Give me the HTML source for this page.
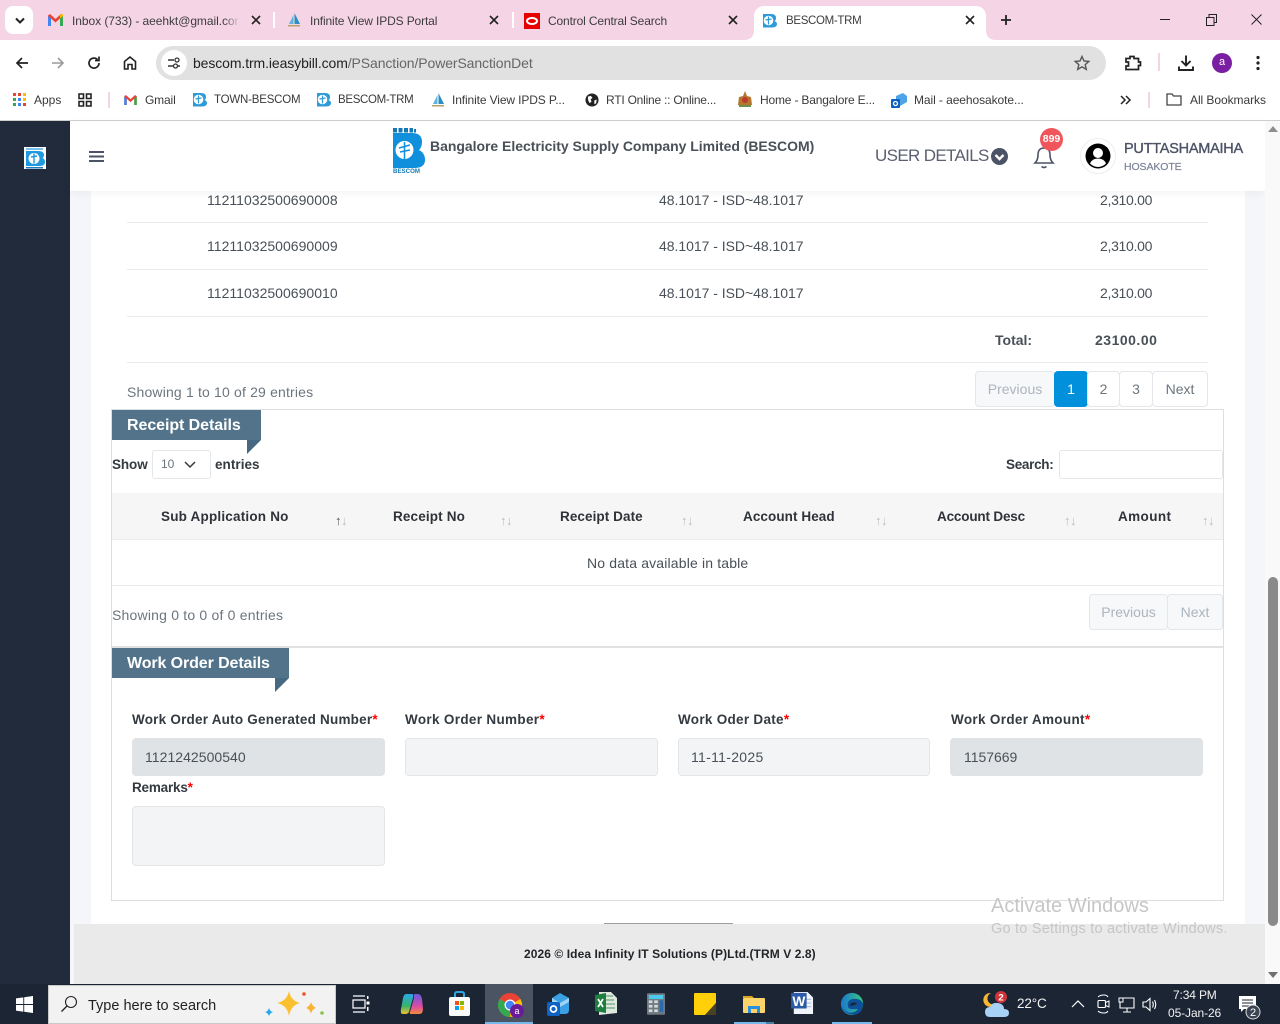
<!DOCTYPE html>
<html lang="en">
<head>
<meta charset="utf-8">
<title>BESCOM-TRM</title>
<style>
*{box-sizing:border-box}
html,body{margin:0;padding:0;width:1280px;height:1024px;overflow:hidden;background:#fff;font-family:"Liberation Sans",sans-serif;color:#212529}
.a{position:absolute}
.t{position:absolute;white-space:nowrap;line-height:16px;font-size:14px}
.tab{font-size:12px;color:#3c3c3c}
.bm{font-size:12px;color:#3a3a3a}
.row{color:#495057;font-size:14px}
.hr{position:absolute;height:1px;background:#e9ecef}
.th{font-weight:bold;font-size:13.5px;color:#2f3238}
.sort{position:absolute;font-size:13px;line-height:12px;color:#b8bcc2;letter-spacing:-.5px;white-space:nowrap}
.lbl{font-weight:bold;font-size:13.5px;color:#343a40}
.lbl b{color:#f00;font-weight:bold}
.inp{position:absolute;border:1px solid #e3e5e8;border-radius:4px;background:#f3f4f6}
.dis{background:#e0e3e6;border-color:#e0e3e6}
.pg{position:absolute;border:1px solid #e3e6ea;border-radius:4px;background:#fff;text-align:center;font-size:14px;line-height:34px;color:#6c757d}
.ribbon{position:absolute;background:#53738a;color:#fff;font-weight:bold;font-size:16px;height:30px;line-height:32px;padding-left:15px;white-space:nowrap}
.fold{position:absolute;width:0;height:0;border-top:14px solid #466880;border-right:14px solid transparent}
svg{position:absolute;overflow:visible}
</style>
</head>
<body>

<!-- Browser tab strip -->
<div class="a" style="left:0;top:0;width:1280px;height:40px;background:#f5d5e5"></div>
<div class="a" style="left:5px;top:6px;width:28px;height:28px;background:#fff;border-radius:8px"></div>
<svg style="left:14px;top:17px" width="12" height="8" viewBox="0 0 12 8"><path d="M2 1.5L6 5.5L10 1.5" fill="none" stroke="#222" stroke-width="2"/></svg>

<svg style="left:48px;top:14px" width="15" height="12" viewBox="0 0 15 12"><path d="M0 12V1.5L2 0 L7.5 5 L13 0 L15 1.5V12H12V4.5L7.5 8.5L3 4.5V12Z" fill="#ea4335"/><path d="M0 12V2L3 4.5V12Z" fill="#4285f4"/><path d="M15 12V2L12 4.5V12Z" fill="#34a853"/><path d="M12 4.5V1L15 0V2Z" fill="#fbbc04"/></svg>
<div class="t tab" style="left:72px;top:13px;width:166px;overflow:hidden;letter-spacing:-.06px">Inbox (733) - aeehkt@gmail.con</div>
<div class="a" style="left:224px;top:10px;width:16px;height:20px;background:linear-gradient(90deg,rgba(245,213,229,0),#f5d5e5)"></div>
<svg style="left:251px;top:15px" width="10" height="10" viewBox="0 0 10 10"><path d="M1 1L9 9M9 1L1 9" stroke="#222" stroke-width="1.6"/></svg>
<div class="a" style="left:273px;top:12px;width:2px;height:16px;background:#fff"></div>

<svg style="left:287px;top:13px" width="14" height="14" viewBox="0 0 14 14"><path d="M7.5 0L13 11H7.5Z" fill="#2b8fc4"/><path d="M6.5 2L2 11H6.5Z" fill="#5bb5dc"/><rect x="1" y="12" width="12" height="1.5" fill="#b9a266"/></svg>
<div class="t tab" style="left:310px;top:13px;letter-spacing:-.13px">Infinite View IPDS Portal</div>
<svg style="left:489px;top:15px" width="10" height="10" viewBox="0 0 10 10"><path d="M1 1L9 9M9 1L1 9" stroke="#222" stroke-width="1.6"/></svg>
<div class="a" style="left:512px;top:12px;width:2px;height:16px;background:#fff"></div>

<div class="a" style="left:524px;top:13px;width:16px;height:16px;background:#e60000"></div>
<div class="a" style="left:526px;top:17px;width:12px;height:8px;border-radius:50%;background:#fff"></div>
<div class="a" style="left:528px;top:19px;width:8px;height:4px;border-radius:50%;background:#e60000"></div>
<div class="t tab" style="left:548px;top:13px;letter-spacing:-.14px">Control Central Search</div>
<svg style="left:728px;top:15px" width="10" height="10" viewBox="0 0 10 10"><path d="M1 1L9 9M9 1L1 9" stroke="#222" stroke-width="1.6"/></svg>

<!-- Active tab -->
<div class="a" style="left:754px;top:6px;width:232px;height:34px;background:#fff;border-radius:10px 10px 0 0"></div>
<svg style="left:744px;top:30px" width="252" height="10" viewBox="0 0 252 10"><path d="M0 10Q10 10 10 0V10Z" fill="#fff"/><path d="M252 10Q242 10 242 0V10Z" fill="#fff"/></svg>
<svg style="left:762px;top:13px" width="15" height="15" viewBox="0 0 15 15"><path d="M1 1H9Q14 1 14 5Q14 7 12.5 8Q15 9 15 11Q15 14.500 10 14.500H1Z" fill="#2c9bd8"/><circle cx="6.500" cy="7.500" r="4.800" fill="#fff"/><path d="M6.500 3.500V11.500M3.500 7L9.500 6" stroke="#2c9bd8" stroke-width="1.2"/></svg>
<div class="t tab" style="left:786px;top:13px;font-size:11.5px;letter-spacing:-.32px">BESCOM-TRM</div>
<svg style="left:965px;top:15px" width="10" height="10" viewBox="0 0 10 10"><path d="M1 1L9 9M9 1L1 9" stroke="#222" stroke-width="1.6"/></svg>
<svg style="left:1000px;top:14px" width="12" height="12" viewBox="0 0 12 12"><path d="M6 1V11M1 6H11" stroke="#222" stroke-width="1.8"/></svg>

<!-- Window controls -->
<svg style="left:1160px;top:19px" width="10" height="1" viewBox="0 0 10 1"><rect width="10" height="1" fill="#222"/></svg>
<svg style="left:1206px;top:14px" width="11" height="12" viewBox="0 0 11 12"><path d="M.5 3.500H8V11.500H.5ZM3 3.500V.5H10.500V8.500H8" fill="none" stroke="#222"/></svg>
<svg style="left:1251px;top:14px" width="11" height="11" viewBox="0 0 11 11"><path d="M.5.5L10.500 10.500M10.500.5L.5 10.500" stroke="#222" stroke-width="1"/></svg>

<!-- Toolbar -->
<div class="a" style="left:0;top:40px;width:1280px;height:80px;background:#fff;border-radius:10px 10px 0 0"></div>
<div class="a" style="left:754px;top:34px;width:232px;height:10px;background:#fff"></div>
<svg style="left:14px;top:55px" width="16" height="16" viewBox="0 0 16 16"><path d="M14 8H3M8 3L3 8L8 13" fill="none" stroke="#222" stroke-width="1.7"/></svg>
<svg style="left:50px;top:55px" width="16" height="16" viewBox="0 0 16 16"><path d="M2 8H13M8 3L13 8L8 13" fill="none" stroke="#9a9a9a" stroke-width="1.6"/></svg>
<svg style="left:86px;top:55px" width="16" height="16" viewBox="0 0 16 16"><path d="M13 8A5 5 0 1 1 11.500 4.500M13 1.500V5.500H9" fill="none" stroke="#222" stroke-width="1.7"/></svg>
<svg style="left:122px;top:55px" width="16" height="16" viewBox="0 0 16 16"><path d="M2.500 14V6.500L8 2L13.500 6.500V14H10V9.500H6V14Z" fill="none" stroke="#222" stroke-width="1.6"/></svg>
<div class="a" style="left:156px;top:46px;width:950px;height:34px;background:#e1e1e1;border-radius:17px"></div>
<div class="a" style="left:161px;top:50px;width:26px;height:26px;background:#fff;border-radius:13px"></div>
<svg style="left:167px;top:56px" width="14" height="14" viewBox="0 0 14 14"><path d="M1 4H7M11 10H13M1 10H6" stroke="#333" stroke-width="1.4"/><circle cx="10" cy="4" r="2" fill="none" stroke="#333" stroke-width="1.3"/><circle cx="8.500" cy="10" r="2" fill="none" stroke="#333" stroke-width="1.3"/></svg>
<div class="t" style="left:193px;top:55px;font-size:14px;color:#222;letter-spacing:-.1px">bescom.trm.ieasybill.com<span style="color:#666">/PSanction/PowerSanctionDet</span></div>
<svg style="left:1074px;top:55px" width="16" height="16" viewBox="0 0 16 16"><path d="M8 1.500L10 6L14.800 6.400L11.200 9.600L12.300 14.400L8 11.800L3.700 14.400L4.800 9.600L1.200 6.400L6 6Z" fill="none" stroke="#555" stroke-width="1.4"/></svg>
<svg style="left:1124px;top:54px" width="18" height="18" viewBox="0 0 18 18"><path d="M2 4.500H6V2.500H10V4.500H14.500V8H16.500V11.500H14.500V15.500H2V12H4.500V8H2Z" fill="none" stroke="#222" stroke-width="1.7"/></svg>
<div class="a" style="left:1158px;top:53px;width:2px;height:18px;background:#f5d5e5"></div>
<svg style="left:1177px;top:54px" width="18" height="18" viewBox="0 0 18 18"><path d="M9 1.500V11M4.500 7L9 11.500L13.500 7M2 12.500V16H16V12.500" fill="none" stroke="#222" stroke-width="1.900"/></svg>
<div class="a" style="left:1212px;top:53px;width:20px;height:20px;border-radius:50%;background:#7b1fa2;color:#fff;font-size:11px;line-height:19px;text-align:center">a</div>
<svg style="left:1256px;top:55px" width="4" height="16" viewBox="0 0 4 16"><circle cx="2" cy="2.500" r="1.600" fill="#222"/><circle cx="2" cy="8" r="1.600" fill="#222"/><circle cx="2" cy="13.500" r="1.600" fill="#222"/></svg>

<!-- Bookmarks bar -->
<svg style="left:13px;top:93px" width="13" height="13" viewBox="0 0 13 13">
<rect width="3" height="3" fill="#ea4335"/><rect x="5" width="3" height="3" fill="#ea4335"/><rect x="10" width="3" height="3" fill="#fbbc04"/>
<rect y="5" width="3" height="3" fill="#34a853"/><rect x="5" y="5" width="3" height="3" fill="#4285f4"/><rect x="10" y="5" width="3" height="3" fill="#fbbc04"/>
<rect y="10" width="3" height="3" fill="#34a853"/><rect x="5" y="10" width="3" height="3" fill="#4285f4"/><rect x="10" y="10" width="3" height="3" fill="#ea4335"/></svg>
<div class="t bm" style="left:34px;top:92px">Apps</div>
<svg style="left:78px;top:93px" width="14" height="14" viewBox="0 0 14 14"><path d="M1 1H5.500V5.500H1ZM8.500 1H13V5.500H8.500ZM1 8.500H5.500V13H1ZM8.500 8.500H13V13H8.500Z" fill="none" stroke="#222" stroke-width="1.600"/></svg>
<div class="a" style="left:108px;top:92px;width:2px;height:16px;background:#f5d5e5"></div>
<svg style="left:124px;top:95px" width="13" height="10" viewBox="0 0 15 12"><path d="M0 12V1.500L2 0 L7.500 5 L13 0 L15 1.500V12H12V4.500L7.500 8.500L3 4.500V12Z" fill="#ea4335"/><path d="M0 12V2L3 4.500V12Z" fill="#4285f4"/><path d="M15 12V2L12 4.500V12Z" fill="#34a853"/></svg>
<div class="t bm" style="left:145px;top:92px;letter-spacing:-.15px">Gmail</div>
<svg style="left:192px;top:92px" width="15" height="15" viewBox="0 0 15 15"><path d="M1 1H9Q14 1 14 5Q14 7 12.500 8Q15 9 15 11Q15 14.500 10 14.500H1Z" fill="#2c9bd8"/><circle cx="6.500" cy="7.500" r="4.800" fill="#fff"/><path d="M6.500 3.500V11.500M3.500 7L9.500 6" stroke="#2c9bd8" stroke-width="1.200"/></svg>
<div class="t bm" style="left:214px;top:92px;font-size:11.5px;letter-spacing:-.2px">TOWN-BESCOM</div>
<svg style="left:316px;top:92px" width="15" height="15" viewBox="0 0 15 15"><path d="M1 1H9Q14 1 14 5Q14 7 12.500 8Q15 9 15 11Q15 14.500 10 14.500H1Z" fill="#2c9bd8"/><circle cx="6.500" cy="7.500" r="4.800" fill="#fff"/><path d="M6.500 3.500V11.500M3.500 7L9.500 6" stroke="#2c9bd8" stroke-width="1.200"/></svg>
<div class="t bm" style="left:338px;top:92px;font-size:11.5px;letter-spacing:-.32px">BESCOM-TRM</div>
<svg style="left:431px;top:93px" width="14" height="14" viewBox="0 0 14 14"><path d="M7.500 0L13 11H7.500Z" fill="#2b8fc4"/><path d="M6.500 2L2 11H6.500Z" fill="#5bb5dc"/><rect x="1" y="12" width="12" height="1.500" fill="#b9a266"/></svg>
<div class="t bm" style="left:452px;top:92px;letter-spacing:-.12px">Infinite View IPDS P...</div>
<svg style="left:585px;top:93px" width="14" height="14" viewBox="0 0 15 15"><circle cx="7.500" cy="7.500" r="7" fill="#222"/><path d="M3 4L6 3L8 5L6 7L7 9L5 11L3.500 8ZM10 8L12.500 7L12 11L10 12Z" fill="#fff"/></svg>
<div class="t bm" style="left:606px;top:92px;letter-spacing:-.22px">RTI Online :: Online...</div>
<svg style="left:737px;top:91px" width="16" height="17" viewBox="0 0 16 17"><path d="M8 0L10 5L14 6L15 14L8 16L1 14L2 6L6 5Z" fill="#b5762f"/><circle cx="8" cy="9" r="3" fill="#c0392b"/><rect x="2" y="14" width="12" height="2" fill="#6d8f4a"/></svg>
<div class="t bm" style="left:760px;top:92px;letter-spacing:-.18px">Home - Bangalore E...</div>
<svg style="left:891px;top:93px" width="16" height="15" viewBox="0 0 16 15"><path d="M5 3L12 0L16 3V9L9 13H5Z" fill="#4fa4e8"/><rect x="0" y="6" width="9" height="9" rx="1" fill="#0f5fc0"/><circle cx="4.500" cy="10.500" r="2" fill="none" stroke="#fff" stroke-width="1.300"/></svg>
<div class="t bm" style="left:914px;top:92px;letter-spacing:-.08px">Mail - aeehosakote...</div>
<svg style="left:1120px;top:95px" width="11" height="10" viewBox="0 0 11 10"><path d="M1 1L5 5L1 9M6 1L10 5L6 9" fill="none" stroke="#222" stroke-width="1.500"/></svg>
<div class="a" style="left:1148px;top:92px;width:2px;height:16px;background:#f5d5e5"></div>
<svg style="left:1166px;top:93px" width="16" height="13" viewBox="0 0 16 13"><path d="M1 1H6L7.500 3H15V12H1Z" fill="none" stroke="#444" stroke-width="1.300"/></svg>
<div class="t bm" style="left:1190px;top:92px;letter-spacing:-.06px">All Bookmarks</div>
<div class="a" style="left:0;top:120px;width:1280px;height:1px;background:#cfcfcf"></div>

<!-- Page background -->
<div class="a" style="left:70px;top:121px;width:1195px;height:863px;background:#f5f6fa"></div>

<!-- White card -->
<div class="a" style="left:91px;top:191px;width:1154px;height:733px;background:#fff"></div>

<!-- Upper table -->
<div class="t row" style="left:207px;top:192px;letter-spacing:.02px">11211032500690008</div>
<div class="t row" style="left:659px;top:192px;letter-spacing:-.03px">48.1017 - ISD~48.1017</div>
<div class="t row" style="left:1100px;top:192px;letter-spacing:-.3px">2,310.00</div>
<div class="hr" style="left:127px;top:222px;width:1081px"></div>
<div class="t row" style="left:207px;top:238px;letter-spacing:.02px">11211032500690009</div>
<div class="t row" style="left:659px;top:238px;letter-spacing:-.03px">48.1017 - ISD~48.1017</div>
<div class="t row" style="left:1100px;top:238px;letter-spacing:-.3px">2,310.00</div>
<div class="hr" style="left:127px;top:269px;width:1081px"></div>
<div class="t row" style="left:207px;top:285px;letter-spacing:.02px">11211032500690010</div>
<div class="t row" style="left:659px;top:285px;letter-spacing:-.03px">48.1017 - ISD~48.1017</div>
<div class="t row" style="left:1100px;top:285px;letter-spacing:-.3px">2,310.00</div>
<div class="hr" style="left:127px;top:316px;width:1081px"></div>
<div class="t" style="left:995px;top:332px;font-weight:bold;color:#495057">Total:</div>
<div class="t" style="left:1095px;top:332px;font-weight:bold;color:#495057;letter-spacing:.5px">23100.00</div>
<div class="hr" style="left:127px;top:362px;width:1081px"></div>
<div class="t" style="left:127px;top:384px;color:#6c757d;letter-spacing:.17px">Showing 1 to 10 of 29 entries</div>

<div class="pg" style="left:975px;top:371px;width:80px;height:36px;background:#f7f8fa;color:#adb5bd">Previous</div>
<div class="pg" style="left:1054px;top:371px;width:34px;height:36px;background:#0090dc;border-color:#0090dc;color:#fff">1</div>
<div class="pg" style="left:1087px;top:371px;width:33px;height:36px">2</div>
<div class="pg" style="left:1119px;top:371px;width:34px;height:36px">3</div>
<div class="pg" style="left:1152px;top:371px;width:56px;height:36px">Next</div>

<!-- Receipt section -->
<div class="a" style="left:111px;top:409px;width:1113px;height:492px;border:1px solid #dcdfe2;background:#fff"></div>
<div class="ribbon" style="left:112px;top:410px;width:149px;letter-spacing:-.07px">Receipt Details</div>
<div class="fold" style="left:247px;top:440px"></div>
<div class="t" style="left:112px;top:457px;font-weight:bold;font-size:13.5px;color:#343a40;letter-spacing:-.1px">Show</div>
<div class="a" style="left:152px;top:450px;width:59px;height:29px;border:1px solid #e3e6ea;border-radius:3px;background:#fff"></div>
<div class="t" style="left:161px;top:456px;font-size:12px;color:#6c757d">10</div>
<svg style="left:184px;top:461px" width="12" height="8" viewBox="0 0 12 8"><path d="M1 1L6 6L11 1" fill="none" stroke="#343a40" stroke-width="1.500"/></svg>
<div class="t" style="left:215px;top:457px;font-weight:bold;font-size:13.5px;color:#343a40;letter-spacing:.05px">entries</div>
<div class="t" style="left:1006px;top:457px;font-weight:bold;font-size:13.5px;color:#343a40;letter-spacing:-.3px">Search:</div>
<div class="a" style="left:1059px;top:450px;width:164px;height:29px;border:1px solid #e3e6ea;border-radius:3px;background:#fff"></div>

<div class="a" style="left:112px;top:493px;width:1111px;height:47px;background:#f6f6f6;border-bottom:1px solid #e9ecef"></div>
<div class="t th" style="left:161px;top:509px;letter-spacing:.2px">Sub Application No</div>
<div class="sort" style="left:335px;top:515px"><span style="color:#555">↑</span>↓</div>
<div class="t th" style="left:393px;top:509px;letter-spacing:.15px">Receipt No</div>
<div class="sort" style="left:500px;top:515px">↑↓</div>
<div class="t th" style="left:560px;top:509px;letter-spacing:.08px">Receipt Date</div>
<div class="sort" style="left:681px;top:515px">↑↓</div>
<div class="t th" style="left:743px;top:509px;letter-spacing:.08px">Account Head</div>
<div class="sort" style="left:875px;top:515px">↑↓</div>
<div class="t th" style="left:937px;top:509px;letter-spacing:-.17px">Account Desc</div>
<div class="sort" style="left:1064px;top:515px">↑↓</div>
<div class="t th" style="left:1118px;top:509px;letter-spacing:.4px">Amount</div>
<div class="sort" style="left:1202px;top:515px">↑↓</div>

<div class="t" style="left:587px;top:555px;color:#495057;letter-spacing:.16px">No data available in table</div>
<div class="hr" style="left:112px;top:585px;width:1111px"></div>
<div class="t" style="left:112px;top:607px;color:#6c757d;letter-spacing:.2px">Showing 0 to 0 of 0 entries</div>
<div class="pg" style="left:1089px;top:594px;width:79px;height:36px;background:#f7f8fa;color:#adb5bd">Previous</div>
<div class="pg" style="left:1167px;top:594px;width:56px;height:36px;background:#f7f8fa;color:#adb5bd">Next</div>

<!-- Work order section -->
<div class="a" style="left:112px;top:646px;width:1111px;height:2px;background:#dfe1e3"></div>
<div class="ribbon" style="left:112px;top:648px;width:177px;letter-spacing:-.1px">Work Order Details</div>
<div class="fold" style="left:275px;top:678px"></div>

<div class="t lbl" style="left:132px;top:712px;letter-spacing:.22px">Work Order Auto Generated Number<b>*</b></div>
<div class="t lbl" style="left:405px;top:712px;letter-spacing:.33px">Work Order Number<b>*</b></div>
<div class="t lbl" style="left:678px;top:712px;letter-spacing:.29px">Work Oder Date<b>*</b></div>
<div class="t lbl" style="left:951px;top:712px;letter-spacing:.33px">Work Order Amount<b>*</b></div>

<div class="inp dis" style="left:132px;top:738px;width:253px;height:38px"></div>
<div class="t" style="left:145px;top:749px;color:#495057;letter-spacing:.04px">1121242500540</div>
<div class="inp" style="left:405px;top:738px;width:253px;height:38px"></div>
<div class="inp" style="left:678px;top:738px;width:252px;height:38px"></div>
<div class="t" style="left:691px;top:749px;color:#495057;letter-spacing:.3px">11-11-2025</div>
<div class="inp dis" style="left:950px;top:738px;width:253px;height:38px"></div>
<div class="t" style="left:964px;top:749px;color:#495057;letter-spacing:-.04px">1157669</div>

<div class="t lbl" style="left:132px;top:780px;letter-spacing:-.2px">Remarks<b>*</b></div>
<div class="inp" style="left:132px;top:806px;width:253px;height:60px"></div>

<!-- Footer -->
<div class="a" style="left:74px;top:924px;width:1191px;height:60px;background:#eaeaea"></div>
<div class="a" style="left:604px;top:923px;width:129px;height:1px;background:#9e9e9e"></div>
<div class="t" style="left:524px;top:946px;font-size:12px;font-weight:bold;color:#212529;letter-spacing:.08px">2026 © Idea Infinity IT Solutions (P)Ltd.(TRM V 2.8)</div>

<!-- Activate watermark -->
<div class="t" style="left:991px;top:895px;font-size:20px;line-height:22px;color:#c6c6c6;letter-spacing:0">Activate Windows</div>
<div class="t" style="left:991px;top:921px;font-size:14.5px;color:#c6c6c6;letter-spacing:.22px">Go to Settings to activate Windows.</div>

<!-- Sidebar -->
<div class="a" style="left:0;top:121px;width:70px;height:863px;background:#212b3c"></div>
<svg style="left:24px;top:147px" width="22" height="22" viewBox="0 0 22 22"><rect width="22" height="22" fill="#fff"/><rect x="2" y="1" width="17" height="2" fill="#7cc0e8"/><path d="M2 4H14Q20 4 20 8Q20 10 18.500 11Q21 12 21 15Q21 19 15 19H2Z" fill="#1f9ae0"/><circle cx="10" cy="11.500" r="5.500" fill="#fff"/><path d="M10 6.500V16.500M7 10L13 9" stroke="#1f9ae0" stroke-width="1.400"/><rect x="2" y="20" width="17" height="1.500" fill="#1f78b8"/></svg>

<!-- Top header -->
<div class="a" style="left:70px;top:121px;width:1195px;height:70px;background:#fff;box-shadow:0 2px 8px rgba(0,0,0,.05)"></div>
<svg style="left:89px;top:151px" width="15" height="11" viewBox="0 0 15 11"><path d="M0 0H15V2H0ZM0 4.500H15V6.500H0ZM0 9H15V11H0Z" fill="#4c5366"/></svg>

<!-- BESCOM logo -->
<svg style="left:392px;top:127px" width="34" height="47" viewBox="0 0 34 47">
<g fill="#1478b5"><rect x="1" y="1" width="4" height="4.500"/><rect x="6.500" y="1" width="4" height="4.500"/><rect x="12" y="1" width="4" height="4.500"/><rect x="17.500" y="1" width="3.500" height="4.500"/><rect x="22" y="2" width="2" height="3.500"/></g>
<path d="M1 6H20Q30 6 30 15Q30 20 27 23Q33 26 33 33Q33 41 22 41H1Z" fill="#0f8fdc"/>
<circle cx="12.500" cy="23" r="9" fill="#fff"/>
<path d="M12.500 15V32M7 21L18 18M8 25L18 23" stroke="#0f8fdc" stroke-width="1.500" fill="none"/>
<text x="1" y="46" font-size="6" font-weight="bold" fill="#1478b5" font-family="Liberation Sans" textLength="27" lengthAdjust="spacingAndGlyphs">BESCOM</text>
</svg>
<div class="t" style="left:430px;top:138px;font-size:14px;font-weight:bold;color:#495057;letter-spacing:-.03px">Bangalore Electricity Supply Company Limited (BESCOM)</div>

<div class="t" style="left:875px;top:146px;font-size:17px;line-height:20px;color:#5a6070;letter-spacing:-.65px">USER DETAILS</div>
<svg style="left:991px;top:148px" width="17" height="17" viewBox="0 0 17 17"><circle cx="8.500" cy="8.500" r="8.500" fill="#4c5366"/><path d="M4.500 7L8.500 11L12.500 7" fill="none" stroke="#fff" stroke-width="2.400"/></svg>
<svg style="left:1033px;top:145px" width="22" height="24" viewBox="0 0 22 24"><path d="M2 18Q5 15 5 10Q5 3 11 3Q17 3 17 10Q17 15 20 18Z" fill="none" stroke="#4c5366" stroke-width="1.600"/><path d="M8.500 21.500Q11 23.500 13.500 21.500" fill="none" stroke="#4c5366" stroke-width="1.600"/></svg>
<div class="a" style="left:1040px;top:128px;width:23px;height:23px;border-radius:50%;background:#f1555c;color:#fff;font-size:10.5px;font-weight:bold;line-height:23px;text-align:center">899</div>
<div class="a" style="left:1080px;top:138px;width:36px;height:36px;border-radius:50%;background:#fff;border:1px solid #eceef0"></div>
<svg style="left:1085px;top:143px" width="26" height="26" viewBox="0 0 26 26"><circle cx="13" cy="13" r="12.500" fill="#000"/><circle cx="13" cy="10" r="4.500" fill="#fff" stroke="#fff"/><path d="M5 20.500Q7 15.500 13 15.500Q19 15.500 21 20.500Q17.500 24 13 24Q8.500 24 5 20.500Z" fill="#fff"/></svg>
<div class="t" style="left:1124px;top:141px;font-size:14.5px;color:#4c5366;letter-spacing:-.25px;-webkit-text-stroke:.35px #4c5366">PUTTASHAMAIHA</div>
<div class="t" style="left:1124px;top:159px;font-size:10.5px;color:#7d8499;letter-spacing:-.1px;-webkit-text-stroke:.2px #7d8499">HOSAKOTE</div>

<!-- Scrollbar -->
<div class="a" style="left:1265px;top:121px;width:15px;height:863px;background:#f9f9f9"></div>
<svg style="left:1268px;top:126px" width="10" height="6" viewBox="0 0 10 6"><path d="M5 0L10 6H0Z" fill="#8f8f8f"/></svg>
<div class="a" style="left:1268px;top:577px;width:10px;height:349px;background:#8a8a8a;border-radius:5px"></div>
<svg style="left:1268px;top:972px" width="10" height="6" viewBox="0 0 10 6"><path d="M0 0H10L5 6Z" fill="#6f6f6f"/></svg>

<!-- Taskbar -->
<div class="a" style="left:0;top:984px;width:1280px;height:40px;background:#1b2534"></div>
<svg style="left:16px;top:996px" width="17" height="17" viewBox="0 0 17 17"><path d="M0 2.400L7.300 1.400V8H0ZM8.200 1.300L17 0V8H8.200ZM0 9H7.300V15.700L0 14.600ZM8.200 9H17V17L8.200 15.800Z" fill="#fff"/></svg>
<div class="a" style="left:48px;top:985px;width:288px;height:39px;background:#f2f2f2;border:1px solid #c9c9c9"></div>
<svg style="left:60px;top:995px" width="18" height="18" viewBox="0 0 18 18"><circle cx="11" cy="7" r="5.500" fill="none" stroke="#222" stroke-width="1.100"/><path d="M7 11L1.500 16.500" stroke="#222" stroke-width="1.300"/></svg>
<div class="t" style="left:88px;top:998px;font-size:14.5px;color:#222;letter-spacing:0">Type here to search</div>
<svg style="left:264px;top:990px" width="64" height="30" viewBox="0 0 64 30">
<path d="M25 1Q27 11 36 13Q27 15 25 26Q23 15 13 13Q23 11 25 1Z" fill="#fbc02d"/>
<path d="M47 12Q48 16 52 18Q48 19 47 24Q46 19 42 18Q46 16 47 12Z" fill="#f9b233"/>
<path d="M5 18Q6 21.500 9 22Q6 23 5 26Q4 23 1 22Q4 21.500 5 18Z" fill="#29a8e8"/>
<circle cx="40" cy="4" r="1.800" fill="#e8532b"/><circle cx="58" cy="23" r="1.800" fill="#8bc34a"/>
</svg>
<svg style="left:352px;top:995px" width="18" height="18" viewBox="0 0 18 18"><path d="M1 1H13M1 17H13M1 5H13V13H1Z" fill="none" stroke="#fff" stroke-width="1.200"/><rect x="15" y="1" width="1.500" height="3" fill="#fff"/><rect x="14.500" y="6.500" width="3" height="3" fill="#fff"/><rect x="15" y="12" width="1.500" height="4" fill="#fff"/></svg>
<svg style="left:400px;top:992px" width="23" height="24" viewBox="0 0 23 24"><defs><linearGradient id="cpa" x1="0" y1="0" x2="0" y2="1"><stop offset="0" stop-color="#2aa7e8"/><stop offset=".6" stop-color="#37b36a"/><stop offset="1" stop-color="#f2c230"/></linearGradient><linearGradient id="cpb" x1="0" y1="0" x2="0" y2="1"><stop offset="0" stop-color="#6a5be0"/><stop offset=".6" stop-color="#d84ba8"/><stop offset="1" stop-color="#f58a3c"/></linearGradient></defs><path d="M6 2H12Q14 2 13 6L9 20Q8 22 5 22H3Q0 22 1 17L3 6Q4 2 6 2Z" fill="url(#cpa)"/><path d="M14 2H18Q21 2 22 7L23 17Q23 22 19 22H11Q9 22 10 20L14 6Z" fill="url(#cpb)"/></svg>
<svg style="left:448px;top:991px" width="23" height="26" viewBox="0 0 23 26"><path d="M7 7V3Q7 1 9 1H14Q16 1 16 3V7" fill="none" stroke="#29a8e8" stroke-width="2"/><rect x="1" y="6" width="21" height="19" rx="2" fill="#fafafa"/><rect x="7" y="10" width="4" height="4" fill="#f25022"/><rect x="12" y="10" width="4" height="4" fill="#7fba00"/><rect x="7" y="15" width="4" height="4" fill="#00a4ef"/><rect x="12" y="15" width="4" height="4" fill="#ffb900"/></svg>
<div class="a" style="left:485px;top:984px;width:48px;height:40px;background:#4a5462"></div>
<div class="a" style="left:485px;top:1022px;width:48px;height:2px;background:#76b9ed"></div>
<svg style="left:497px;top:992px" width="30" height="28" viewBox="0 0 30 28"><circle cx="13" cy="13" r="12" fill="#ea4335"/><path d="M13 13L2.600 7A12 12 0 0 0 13 25Z" fill="#34a853"/><path d="M13 13L23.400 7A12 12 0 0 1 13 25Z" fill="#fbbc04"/><circle cx="13" cy="13" r="5.500" fill="#fff"/><circle cx="13" cy="13" r="4.200" fill="#4285f4"/><circle cx="20" cy="19" r="7" fill="#6a1b9a"/><text x="20" y="22" font-size="9" fill="#fff" text-anchor="middle" font-family="Liberation Sans">a</text></svg>
<svg style="left:546px;top:992px" width="24" height="26" viewBox="0 0 24 26"><path d="M6 6L14 1L23 6V18Q23 22 19 22H6Z" fill="#3aa0e6"/><path d="M6 6L14 11L23 6V10L14 15L6 10Z" fill="#9fd4f5"/><rect x="1" y="10" width="13" height="14" rx="2" fill="#0f62c4"/><circle cx="7.500" cy="17" r="3" fill="none" stroke="#fff" stroke-width="1.700"/></svg>
<svg style="left:595px;top:992px" width="23" height="23" viewBox="0 0 23 23"><path d="M4 0H16L22 6V21L4 23Z" fill="#dfe8df"/><path d="M8 4H18M8 8H19M8 12H20M8 16H20" stroke="#7fb08f" stroke-width="1.500"/><path d="M0 3L11 1V21L0 19Z" fill="#1e7e3e"/><path d="M3 7L8 15M8 7L3 15" stroke="#fff" stroke-width="1.700"/></svg>
<svg style="left:647px;top:992px" width="18" height="24" viewBox="0 0 20 24"><rect width="20" height="24" rx="1" fill="#6f7a80"/><rect x="2" y="2" width="16" height="4.500" fill="#4dc8f0"/><g fill="#d6dadc"><rect x="2" y="8" width="4" height="3"/><rect x="8" y="8" width="4" height="3"/><rect x="2" y="13" width="4" height="3"/><rect x="8" y="13" width="4" height="3"/><rect x="2" y="18" width="4" height="3"/><rect x="8" y="18" width="4" height="3"/></g><rect x="14" y="8" width="4" height="13" fill="#2a6ab0"/></svg>
<svg style="left:694px;top:993px" width="22" height="22" viewBox="0 0 22 22"><path d="M1 0H21Q22 0 22 1V10L11 22H1Q0 22 0 21V1Q0 0 1 0Z" fill="#ffcf0a"/><path d="M22 10V21Q22 22 21 22H11Z" fill="#4a4122"/></svg>
<svg style="left:743px;top:995px" width="22" height="18" viewBox="0 0 22 18"><path d="M0 1H9L11 3H0Z" fill="#d9a520"/><rect x="0" y="3" width="22" height="15" rx="1" fill="#fdd46a"/><path d="M5 18V11H17V18H14V14H8V18Z" fill="#2a8fdc"/></svg>
<div class="a" style="left:734px;top:1022px;width:32px;height:2px;background:#76b9ed"></div>
<div class="a" style="left:766px;top:1022px;width:8px;height:2px;background:#4a7fa8"></div>
<svg style="left:791px;top:992px" width="23" height="22" viewBox="0 0 25 24"><path d="M3 0H18L24 6V24H3Z" fill="#f0f4fa"/><path d="M17 8H22M17 12H22M17 16H22" stroke="#a9bad6" stroke-width="1.200"/><rect x="0" y="1" width="17" height="17" fill="#2a5aa8"/><text x="8.500" y="15" font-size="15" font-weight="bold" fill="#fff" text-anchor="middle" font-family="Liberation Sans">W</text></svg>
<svg style="left:840px;top:992px" width="24" height="24" viewBox="0 0 28 26"><defs><linearGradient id="ed" x1="0" y1="0" x2="1" y2="0"><stop offset="0" stop-color="#1b78d0"/><stop offset="1" stop-color="#36c77e"/></linearGradient></defs><circle cx="14" cy="13" r="13" fill="url(#ed)"/><path d="M27 14Q26 7 17 7Q9 7 9 14Q9 19 14 19H21Q17 24 10 23Q2 20 3 11Q2 22 12 25Q20 27 25 21Z" fill="#0d4f98"/><path d="M12 13Q15 10 20 12Q18 15 12 15Z" fill="#1b2534"/></svg>
<div class="a" style="left:832px;top:1022px;width:40px;height:2px;background:#76b9ed"></div>

<!-- Tray -->
<svg style="left:984px;top:991px" width="26" height="27" viewBox="0 0 26 27"><path d="M7 2A7 7 0 1 0 12 13A6 6 0 0 1 7 2Z" fill="#f7b733"/><path d="M6 26Q1 26 1 21Q1 16 6 16Q8 11 14 12Q20 13 20 18Q25 18 25 22Q25 26 20 26Z" fill="#a8d2f5"/><circle cx="17" cy="6" r="6" fill="#d13438"/><text x="17" y="9.500" font-size="9.500" font-weight="bold" fill="#fff" text-anchor="middle" font-family="Liberation Sans">2</text></svg>
<div class="t" style="left:1017px;top:996px;font-size:13.5px;color:#f2f2f2;letter-spacing:-.15px">22°C</div>
<svg style="left:1071px;top:999px" width="14" height="9" viewBox="0 0 14 9"><path d="M1 8L7 2L13 8" fill="none" stroke="#fff" stroke-width="1.200"/></svg>
<svg style="left:1096px;top:994px" width="14" height="20" viewBox="0 0 14 20"><rect x="2" y="6.500" width="7.500" height="7" rx="1" fill="none" stroke="#fff" stroke-width="1.100"/><path d="M9.500 8.500L13 7V13L9.500 11.500M2 3Q4 1 8 1Q11 1 12 3M2 17Q4 19 8 19Q11 19 12 17" fill="none" stroke="#fff" stroke-width="1"/></svg>
<svg style="left:1118px;top:997px" width="17" height="16" viewBox="0 0 17 16"><path d="M4 1H16V11H2V5M9 11V15M5 15H13" fill="none" stroke="#fff" stroke-width="1.100"/><rect x="1" y="1" width="4" height="4" fill="#1b2534" stroke="#fff"/></svg>
<svg style="left:1142px;top:997px" width="16" height="15" viewBox="0 0 16 15"><path d="M1 5H4L8 1.500V13.500L4 10H1ZM10.500 4.500Q12 7.500 10.500 10.500M12.500 3Q15 7.500 12.500 12" fill="none" stroke="#fff" stroke-width="1.100"/></svg>
<div class="t" style="left:1173px;top:987px;font-size:12px;color:#f2f2f2;letter-spacing:-.15px">7:34 PM</div>
<div class="t" style="left:1168px;top:1005px;font-size:12px;color:#f2f2f2;letter-spacing:-.1px">05-Jan-26</div>
<svg style="left:1238px;top:995px" width="24" height="26" viewBox="0 0 24 26"><path d="M1 1H18V14H6L3 17V14H1Z" fill="#fff"/><path d="M4 5H15M4 8H15M4 11H12" stroke="#1b2534" stroke-width="1"/><circle cx="15" cy="17" r="7" fill="#3a4452" stroke="#ddd"/><text x="15" y="21" font-size="11" fill="#fff" text-anchor="middle" font-family="Liberation Sans">2</text></svg>
</body>
</html>
